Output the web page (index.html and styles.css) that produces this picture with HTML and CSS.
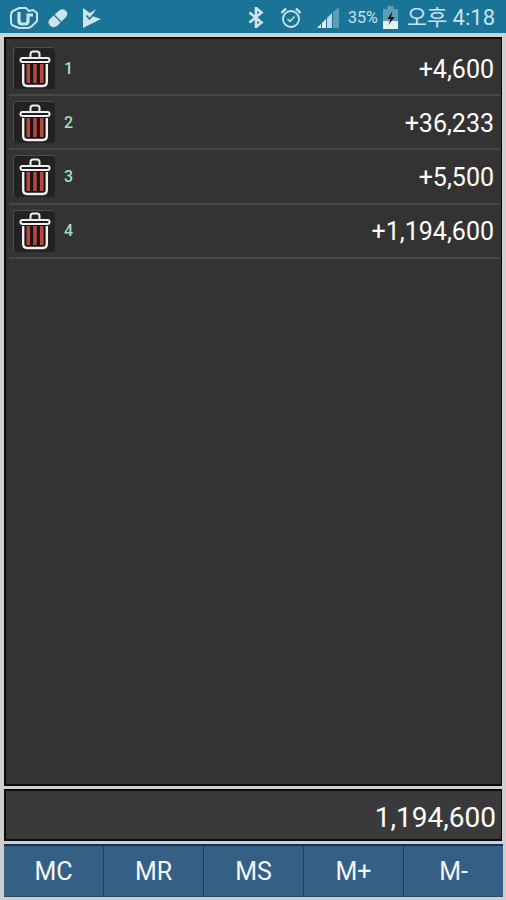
FILE: index.html
```html
<!DOCTYPE html>
<html lang="en">
<head>
    <meta charset="UTF-8">
    <meta name="viewport" content="width=device-width, initial-scale=1.0">
    <title>Memory</title>
    <link rel="stylesheet" href="styles.css">
</head>
<body>
    <svg width="0" height="0" class="defs">
        <symbol id="trash" viewBox="0 0 32 38">
            <path d="M4 13h24v19q0 5-5 5H9q-5 0-5-5z" fill="#161616"/>
            <path d="M7.500 14h3.600v19H7.500zM14.200 14h3.600v19h-3.600zM20.900 14h3.600v19h-3.600z" fill="#b5483f"/>
            <path d="M4.200 14v18q0 4 4 4h15.600q4 0 4-4V14" fill="none" stroke="#f0f0f0" stroke-width="2.400"/>
            <path d="M3.500 10h25" stroke="#f0f0f0" stroke-width="6" stroke-linecap="round"/>
            <path d="M3.500 10h25" stroke="#1c1c1c" stroke-width="2" stroke-linecap="round"/>
            <path d="M11.500 7V4q0-2.500 2.500-2.500h4q2.500 0 2.500 2.500v3" fill="none" stroke="#f0f0f0" stroke-width="2"/>
        </symbol>
    </svg>

    <div class="status-bar">
        <div class="status-left">
            <svg class="icon logo" width="28" height="22" viewBox="0 0 28 22">
                <path d="M3 4Q1 5 1 8v7q0 3 3 4l5 2h8q3 0 5-2l5-5V6l-4-3-4 1-3-3H9z" fill="none" stroke="#c9e2eb" stroke-width="2"/>
                <path d="M9 5v9q0 3 3 3h3q3 0 3-3V8h5" fill="none" stroke="#c9e2eb" stroke-width="3.200"/>
            </svg>
            <svg class="icon pill" width="20" height="20" viewBox="0 0 20 20">
                <path d="M1.500 11.500L10.500 3q3.500-3 7-.5t.5 6.500L9.500 17.500q-3.500 3-7 .5t-1-6.500z" fill="#cfe4ec"/>
                <path d="M6 7l7 7" stroke="#1a7497" stroke-width="1.200"/>
            </svg>
            <svg class="icon flag" width="18" height="20" viewBox="0 0 18 20">
                <path d="M0 0l7 5 6-4-4 7 9 3L0 20z" fill="#cfe4ec"/>
                <path d="M3.500 7.500l3 3.500 6-7" fill="none" stroke="#1a7497" stroke-width="1.600"/>
            </svg>
        </div>
        <div class="status-right">
            <svg class="icon" width="16" height="21" viewBox="0 0 16 21">
                <path d="M1.500 5.500l12 10-5.500 4.500V1l5.500 4.500-12 10" fill="none" stroke="#cfe4ec" stroke-width="2.600"/>
            </svg>
            <svg class="icon alarm" width="22" height="22" viewBox="0 0 22 22">
                <circle cx="11" cy="12" r="8" fill="none" stroke="#cfe4ec" stroke-width="1.800"/>
                <path d="M7.500 12l2.500 2.500 4.500-5" fill="none" stroke="#cfe4ec" stroke-width="1.500"/>
                <path d="M1.500 6l4.500-4.500M20.500 6L16 1.500" stroke="#cfe4ec" stroke-width="2.400"/>
            </svg>
            <svg class="icon signal" width="23" height="22" viewBox="0 0 23 22">
                <path d="M0 21l4-4v4z" fill="#e6f1f5"/>
                <path d="M5 21v-5l4-4v9z" fill="#e6f1f5"/>
                <path d="M10 21V11l5-5v15z" fill="#c0d9e3"/>
                <path d="M16 21V5l6-5v21z" fill="#5f9db5"/>
            </svg>
            <span class="battery-text">35%</span>
            <svg class="icon" width="15" height="23" viewBox="0 0 15 23">
                <path d="M0 3h15v20H0z" fill="#5f9db5"/>
                <path d="M4.500 0h6v3h-6z" fill="#5f9db5"/>
                <path d="M0 15h15v8H0z" fill="#e6f1f5"/>
                <path d="M9.500 5l-5 8h3l-2 6 6-8H8z" fill="#111"/>
            </svg>
            <span class="clock">오후 4:18</span>
        </div>
    </div>

    <div class="content">
        <div class="list-panel">
            <div class="row">
                <button class="delete-btn"><svg width="32" height="38"><use href="#trash"/></svg></button>
                <span class="row-index">1</span>
                <span class="row-value">+4,600</span>
            </div>
            <div class="row">
                <button class="delete-btn"><svg width="32" height="38"><use href="#trash"/></svg></button>
                <span class="row-index">2</span>
                <span class="row-value">+36,233</span>
            </div>
            <div class="row">
                <button class="delete-btn"><svg width="32" height="38"><use href="#trash"/></svg></button>
                <span class="row-index">3</span>
                <span class="row-value">+5,500</span>
            </div>
            <div class="row">
                <button class="delete-btn"><svg width="32" height="38"><use href="#trash"/></svg></button>
                <span class="row-index">4</span>
                <span class="row-value">+1,194,600</span>
            </div>
        </div>

        <div class="total">1,194,600</div>

        <div class="button-group">
            <button class="mem-btn">MC</button>
            <button class="mem-btn">MR</button>
            <button class="mem-btn">MS</button>
            <button class="mem-btn">M+</button>
            <button class="mem-btn">M-</button>
        </div>
    </div>
</body>
</html>
```

FILE: styles.css
```css
html, body {
    height: 100%;
}
body {
    font-family: Roboto, "Liberation Sans", "Noto Sans CJK KR", sans-serif;
    background-color: #cfcfcf;
    margin: 0;
    padding: 0;
    display: flex;
    flex-direction: column;
    overflow: hidden;
}
.defs {
    display: none;
}
.icon {
    display: block;
}
.status-bar {
    height: 33px;
    flex: none;
    background-color: #1a7497;
    display: flex;
    justify-content: space-between;
    align-items: center;
    padding: 2px 11px 0 10px;
    box-sizing: border-box;
    color: #c9e2eb;
}
.status-left {
    display: flex;
    align-items: center;
}
.pill {
    margin-left: 10px;
}
.flag {
    margin-left: 15px;
}
.status-right {
    display: flex;
    align-items: center;
}
.alarm {
    margin-left: 16px;
}
.signal {
    margin-left: 15px;
}
.battery-text {
    font-size: 16px;
    margin-left: 8px;
    margin-right: 5px;
}
.clock {
    font-size: 22px;
    line-height: 26px;
    margin-left: 9px;
}
.content {
    flex: 1;
    display: flex;
    flex-direction: column;
    padding: 4px 4px 3px;
    gap: 3px;
    min-height: 0;
}
.list-panel {
    flex: 1;
    background-color: #333;
    border: 2px solid #0c0c0c;
    border-right-width: 1px;
    padding: 3px 1px 0 3px;
}
.row {
    height: 52.200px;
    border-bottom: 2px solid #474747;
    display: flex;
    align-items: center;
    color: #fff;
}
.delete-btn {
    width: 42px;
    height: 42px;
    margin: 0 0 0 4px;
    padding: 0;
    background-color: #222;
    border: none;
    border-top: 1px solid #4d4d4d;
    border-left: 1px solid #4d4d4d;
    border-radius: 3px;
    display: flex;
    align-items: center;
    justify-content: center;
}
.row-index {
    margin-left: 9px;
    font-size: 16px;
    font-weight: 500;
    color: #a5dcc8;
}
.row-value {
    margin-left: auto;
    margin-right: 6px;
    padding-top: 2px;
    font-size: 25px;
}
.total {
    height: 44px;
    flex: none;
    background-color: #3a3a3a;
    border: 2px solid #0c0c0c;
    border-right-width: 1px;
    color: #fff;
    font-size: 28px;
    display: flex;
    align-items: center;
    justify-content: flex-end;
    padding-right: 5px;
    padding-top: 4px;
}
.button-group {
    height: 53px;
    flex: none;
    display: flex;
    margin-right: -1px;
}
.mem-btn {
    flex: 1;
    background-color: #365f86;
    color: #f2f6f9;
    border: none;
    border-top: 2px solid #12335a;
    border-right: 1px solid #2b3a49;
    border-bottom: 1px solid #2b4a68;
    font-family: inherit;
    font-size: 25px;
    padding: 0;
}
.mem-btn:last-child {
    border-right: none;
}
```
